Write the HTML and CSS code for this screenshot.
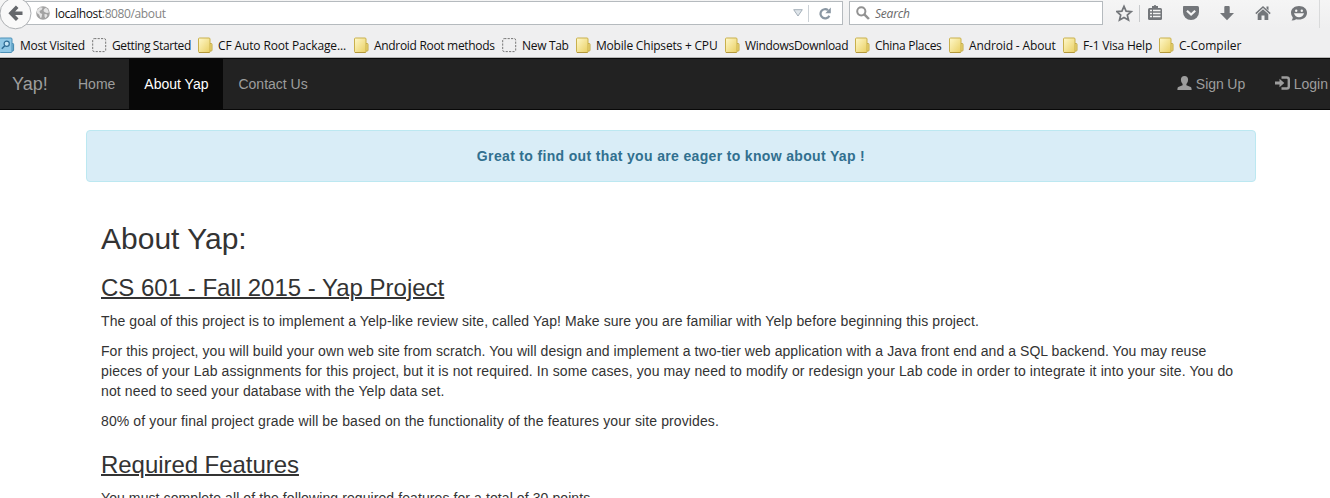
FILE: index.html
```html
<!DOCTYPE html>
<html lang="en">
<head>
<meta charset="utf-8">
<title>About Yap</title>
<link rel="stylesheet" href="styles.css">
</head>
<body>
<svg class="defs" aria-hidden="true">
  <defs>
    <linearGradient id="gold" x1="0" y1="0" x2="1" y2="1"><stop offset="0" stop-color="#fff9cc"/><stop offset="1" stop-color="#e9cf62"/></linearGradient>
    <symbol id="folder" viewBox="0 0 15 17">
      <path d="M11 6.5h2.2q.8 0 .8.8v5.900q0 .8-.8.8H11z" fill="#f0dc7d" stroke="#c2a945"/>
      <rect x=".5" y="1" width="11.5" height="14.500" rx="1" fill="url(#gold)" stroke="#c9b04c"/>
      <path d="M1 15.500h10.500" stroke="#b3983a"/>
    </symbol>
    <symbol id="blank" viewBox="0 0 15 17"><rect x=".7" y="1.600" width="13" height="13" rx="1.500" fill="none" stroke="#777" stroke-dasharray="2.200 1.200"/></symbol>
    <symbol id="visited" viewBox="0 0 15 17">
      <path d="M11 6.500h1.800q.8 0 .8.800v5.900q0 .8-.8.8H11z" fill="#7db8d8" stroke="#4186ad"/>
      <rect x="-.5" y="1" width="12.500" height="14.500" rx="1" fill="#90c8e6" stroke="#4d91b8"/>
      <circle cx="6.700" cy="6.800" r="2.600" fill="#c6e6f6" stroke="#2f6c94" stroke-width="1.200"/>
      <path d="M4.800 8.800 1.800 11.800" stroke="#2f6c94" stroke-width="1.600"/>
    </symbol>
  </defs>
</svg>
<header class="browser">
  <div class="toolbar">
    <span class="back"><svg width="32" height="32" viewBox="0 0 32 32"><circle cx="15.500" cy="13.300" r="15.500" fill="#f9f9f9" stroke="#adb0b3"/><path d="M22.500 13.300H11M17.200 6.800l-6.300 6.500 6.300 6.500" fill="none" stroke="#65686c" stroke-width="3.600"/></svg></span>
    <div class="address">
      <svg class="globe" width="14" height="14" viewBox="0 0 14 14"><circle cx="7" cy="7" r="6.800" fill="#a2a2a2"/><path d="M1 4.200 4 1.200l2.700.5-1 2L3.500 5 4 7 6.200 8 5.500 11.600 4.500 12 3 8.500 1 7zM8 3l2-1.300 2 2 .9 2.800-2 .5-2-.7-1.400-1.200zM8.500 8l2.200.3.700 1.500-2 2.500-.9-1.800z" fill="#e4e4e4"/></svg>
      <span class="url">localhost<span class="muted">:8080/about</span></span>
      <svg class="drop" width="10" height="8" viewBox="0 0 10 8"><path d="M.7.700h8.600L5 7z" fill="#dfe5ea" stroke="#a4afb9"/></svg>
      <span class="split"></span>
      <svg class="reload" width="13" height="13" viewBox="0 0 13 13"><path d="M10.300 8.700A4.600 4.600 0 1 1 9 3.200" fill="none" stroke="#8a97a3" stroke-width="2.200"/><path d="M11.800.6v5.700H6.300z" fill="#8a97a3"/></svg>
    </div>
    <div class="search">
      <svg width="14" height="14" viewBox="0 0 14 14"><circle cx="5.300" cy="5.300" r="4.100" fill="none" stroke="#929292" stroke-width="2"/><path d="m8.300 8.300 4.600 4.700" stroke="#929292" stroke-width="2.500"/></svg>
      <span>Search</span>
    </div>
    <svg class="tools" width="214" height="28" viewBox="1116 0 214 28">
      <path d="m1124 6.300 2.100 4.900 5.100.4-3.900 3.400 1.200 5.100-4.500-2.700-4.500 2.700 1.200-5.100-3.900-3.400 5.100-.4z" fill="none" stroke="#73767a" stroke-width="1.700"/>
      <path d="M1139.500 5v17" stroke="#c8cacc"/>
      <rect x="1148" y="8" width="14" height="12" rx="1.500" fill="#73767a"/><path d="M1152 8.500V6h1.800q.2-1 1.200-1t1.200 1h1.800v2.500z" fill="#73767a"/>
      <path d="M1150 10.500h2m1 0h7.500M1150 13.500h2m1 0h7.500M1150 16.500h2m1 0h7.500" stroke="#f3f3f3" stroke-width="1.600"/>
      <path d="M1183.500 6h14q1.500 0 1.500 1.500V12a8 8 0 0 1-16 0V7.500q0-1.500.5-1.500z" fill="#73767a"/><path d="m1187 10.800 4.100 3.800 4.100-3.800" fill="none" stroke="#f5f5f5" stroke-width="2.200"/>
      <path d="M1224.300 7q0-1 1-1h3.400q1 0 1 1v6h4.300l-7 7.200-7-7.200h4.300z" fill="#73767a"/>
      <path d="m1255.800 13.600 7.200-6.700 7.200 6.700" fill="none" stroke="#73767a" stroke-width="1.500"/><path d="m1263 9.200 5.300 4.900V20h-3.800v-4.500h-3V20h-3.800v-5.900zM1266.500 6.500h2v4l-2-2z" fill="#73767a"/>
      <path d="M1299 6c4.500 0 8 2.800 8 6.700s-3.500 6.900-8 6.900q-1.500 0-2.800-.4-1.700 1.200-4.700 1.400 1.300-1.500 1.300-3.100-1.800-2-1.800-4.800C1291 8.800 1294.500 6 1299 6z" fill="#73767a"/><circle cx="1296.200" cy="10.800" r="1.200" fill="#f5f5f5"/><circle cx="1301.800" cy="10.800" r="1.200" fill="#f5f5f5"/><path d="M1294 13.300h10q-1.200 3.900-5 3.900t-5-3.900z" fill="#f5f5f5"/>
      <path d="M1319.500 0v28" stroke="#d9dadb"/>
    </svg>
  </div>
  <nav class="bookmarks">
    <a class="snug"><svg><use href="#visited"/></svg><span>Most Visited</span></a>
    <a><svg><use href="#blank"/></svg><span>Getting Started</span></a>
    <a class="wide"><svg><use href="#folder"/></svg><span>CF Auto Root Package...</span></a>
    <a class="snug"><svg><use href="#folder"/></svg><span>Android Root methods</span></a>
    <a class="snug"><svg><use href="#blank"/></svg><span>New Tab</span></a>
    <a class="roomy"><svg><use href="#folder"/></svg><span>Mobile Chipsets + CPU</span></a>
    <a class="snug"><svg><use href="#folder"/></svg><span>WindowsDownload</span></a>
    <a class="snug"><svg><use href="#folder"/></svg><span>China Places</span></a>
    <a class="wide"><svg><use href="#folder"/></svg><span>Android - About</span></a>
    <a class="roomy"><svg><use href="#folder"/></svg><span>F-1 Visa Help</span></a>
    <a class="full"><svg><use href="#folder"/></svg><span>C-Compiler</span></a>
  </nav>
</header>
<nav class="navbar">
  <a class="brand">Yap!</a>
  <a class="link">Home</a>
  <a class="link active">About Yap</a>
  <a class="link">Contact Us</a>
  <div class="account">
    <a class="link"><svg width="15" height="14" viewBox="0 0 15 14"><path d="M7.500 0q3.600 0 3.600 3.800 0 2.600-1.700 4.300v1.200l4.300 1.800q.9.500.9 2.300v.6H.4v-.6q0-1.800.9-2.300l4.300-1.800V8.100Q3.900 6.400 3.900 3.800 3.900 0 7.500 0z" fill="#9d9d9d"/></svg> Sign Up</a>
    <a class="link"><svg width="15" height="14" viewBox="0 0 15 14"><path d="M6.500 1.500h5.300q2 0 2 2v7q0 2-2 2H6.500" fill="none" stroke="#9d9d9d" stroke-width="2.400"/><path d="M0 5.500h4.500V2.800L9.300 7l-4.800 4.200V8.500H0z" fill="#9d9d9d"/></svg> Login</a>
  </div>
</nav>
<main class="container">
  <div class="alert">Great to find out that you are eager to know about Yap !</div>
  <section class="content">
    <h2>About Yap:</h2>
    <h3><u>CS 601 - Fall 2015 - Yap Project</u></h3>
    <p>The goal of this project is to implement a Yelp-like review site, called Yap! Make sure you are familiar with Yelp before beginning this project.</p>
    <p class="intro"><span class="tight">For this project, you will build your own web site from scratch. You will design and implement a two-tier web application with a Java front end and a SQL backend. You may reuse</span><br>pieces of your Lab assignments for this project, but it is not required. In some cases, you may need to modify or redesign your Lab code in order to integrate it into your site. You do<br>not need to seed your database with the Yelp data set.</p>
    <p class="grade">80% of your final project grade will be based on the functionality of the features your site provides.</p>
    <h3 class="features"><u>Required Features</u></h3>
    <p>You must complete all of the following required features for a total of 30 points.</p>
  </section>
</main>
</body>
</html>
```
FILE: styles.css
```css
* { box-sizing: border-box; }
html, body { height: 498px; overflow: hidden; }
body { margin: 0; background: #fff; color: #333; font: 14px/20px "Liberation Sans", Arial, sans-serif; }
svg { flex: none; }
.defs { position: absolute; width: 0; height: 0; }
.browser { height: 58px; background: linear-gradient(#f5f5f5, #efeff0 28px); border-bottom: 1px solid #b5b5b5; font: 12px/16px "Open Sans", "Noto Sans", sans-serif; color: #111; overflow: hidden; }
.toolbar { display: flex; height: 32px; }
.back { width: 32px; height: 32px; z-index: 1; }
.back svg { display: block; }
.address { display: flex; align-items: center; width: 826px; height: 24px; margin: 1px 0 0 -15px; padding-left: 19px; background: #fff; border: 1px solid #b5babe; border-left: 0; }
.url { margin: 1px 0 0 5px; letter-spacing: -.38px; }
.muted { color: #848484; }
.drop { margin-left: auto; }
.split { width: 1px; height: 17px; margin: 0 10px 0 5px; background: #ccd2d7; }
.reload { margin-right: 10px; }
.search { display: flex; align-items: center; gap: 5px; width: 254px; height: 24px; margin: 1px 0 0 6px; padding-left: 6px; background: #fff; border: 1px solid #b5babe; font-style: italic; color: #696969; letter-spacing: -.2px; }
.search span { margin-top: 1px; }
.tools { margin-left: 13px; }
.bookmarks { display: grid; grid-template-columns: 92px 106px 156px 148px 74px 149px 130px 94px 114px 96px 90px; height: 25px; padding-top: 4px; }
.bookmarks a { display: flex; align-items: center; gap: 5px; height: 18px; white-space: nowrap; letter-spacing: -.4px; }
.bookmarks span { margin-top: 2px; }
.bookmarks .snug { letter-spacing: -.31px; }
.bookmarks .roomy { letter-spacing: -.2px; }
.bookmarks .wide { letter-spacing: -.13px; }
.bookmarks .full { letter-spacing: 0; }
.bookmarks svg { width: 15px; height: 17px; }
.navbar { display: flex; height: 52px; background: #222; border: solid #080808; border-width: 1px 0; color: #9d9d9d; white-space: nowrap; }
.brand { width: 63px; padding: 15px 0 15px 12px; font-size: 18px; }
.link { padding: 15px 14px 15px 15px; }
.link svg { vertical-align: -1px; }
.active { padding-right: 15px; background: #080808; color: #fff; }
.account { display: flex; margin-left: auto; margin-right: -13px; }
.account .link { padding-right: 15px; word-spacing: -.4px; }
.container { width: 1170px; margin: 20px 0 0 86px; }
.alert { height: 52px; padding: 15px; border: 1px solid #bce8f1; border-radius: 4px; background: #d9edf7; color: #31708f; font-weight: bold; text-align: center; letter-spacing: .34px; }
.content { padding: 40px 15px 0; }
h2, h3 { font-weight: normal; line-height: 1.1; }
h2 { margin: 0 0 20px; font-size: 30px; }
h3 { margin: 20px 0 10px; font-size: 24px; }
.features { margin: 21px 0 9px; letter-spacing: -.05px; }
u { text-decoration-thickness: 2px; }
p { margin: 0 0 10px; letter-spacing: .09px; white-space: nowrap; }
.intro { letter-spacing: .118px; }
.tight { letter-spacing: .062px; }
.grade { letter-spacing: .115px; }
```
